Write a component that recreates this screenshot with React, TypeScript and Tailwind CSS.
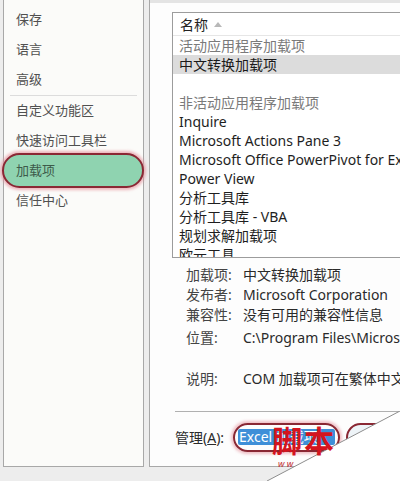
const FONT = '"Noto Sans", "Noto Sans CJK SC", sans-serif';

const NAV_TOP = ['保存', '语言', '高级'];
const NAV_BOTTOM = ['自定义功能区', '快速访问工具栏', '加载项', '信任中心'];

const ROWS: { text: string; kind: 'group' | 'item' | 'selected' | 'blank' }[] = [
  { text: '活动应用程序加载项', kind: 'group' },
  { text: '中文转换加载项', kind: 'selected' },
  { text: '', kind: 'blank' },
  { text: '非活动应用程序加载项', kind: 'group' },
  { text: 'Inquire', kind: 'item' },
  { text: 'Microsoft Actions Pane 3', kind: 'item' },
  { text: 'Microsoft Office PowerPivot for Excel 2013', kind: 'item' },
  { text: 'Power View', kind: 'item' },
  { text: '分析工具库', kind: 'item' },
  { text: '分析工具库 - VBA', kind: 'item' },
  { text: '规划求解加载项', kind: 'item' },
  { text: '欧元工具', kind: 'item' },
];

const DETAILS = [
  { label: '加载项:', value: '中文转换加载项', cls: 'mt-0' },
  { label: '发布者:', value: 'Microsoft Corporation', cls: 'mt-0' },
  { label: '兼容性:', value: '没有可用的兼容性信息', cls: 'mt-0' },
  { label: '位置:', value: 'C:\\Program Files\\Microsoft Office\\Office15', cls: 'mt-[3px]' },
  { label: '说明:', value: 'COM 加载项可在繁体中文和简体中文之间转换', cls: 'mt-[21px]' },
];

function NavItem({ label, active }: { label: string; active?: boolean }) {
  return (
    <div className="relative h-[30px] flex items-center pl-[12px] text-[13px] text-[#505050]">
      {active && (
        <div className="absolute -left-[2px] -right-[1px] -top-[3px] -bottom-[2px] rounded-full bg-[#8fd3b0] border-2 border-[#8a2834] shadow-[0_0_3px_2px_rgba(230,150,160,0.7)]" />
      )}
      <span className={active ? 'relative text-[#3d5a4a]' : 'relative'}>{label}</span>
    </div>
  );
}

export default function App() {
  return (
    <div
      className="relative w-[400px] h-[481px] overflow-hidden bg-[#ededed] flex gap-[5px] pl-[3px] pb-[14px]"
      style={{ fontFamily: FONT }}
    >
      {/* left nav */}
      <div className="w-[141px] shrink-0 bg-[#fbfbf9] border-x border-b border-[#a8a8a8] pt-[5px]">
        {NAV_TOP.map((l) => (
          <NavItem key={l} label={l} />
        ))}
        <div className="mx-[6px] h-px bg-[#dcdcdc]" />
        {NAV_BOTTOM.map((l) => (
          <NavItem key={l} label={l} active={l === '加载项'} />
        ))}
      </div>

      {/* right content */}
      <div className="flex-1 min-w-0 bg-[#fdfdfd] border-l border-b border-[#a8a8a8] overflow-hidden flex flex-col">
        <div className="h-[3px] bg-[#e4e4e4]" />
        <div className="pl-[22px] pt-[9px]">
          <div className="w-[260px] h-[246px] border-l border-y border-[#9c9c9c] bg-white overflow-hidden text-[14px] leading-[19px] whitespace-nowrap">
            <div className="h-[23px] flex items-center pl-[7px] gap-[6px] border-b border-[#e6e6e6] text-[#222]">
              <span>名称</span>
              <svg width="8" height="5" viewBox="0 0 8 5">
                <path d="M0 5 L4 0 L8 5 Z" fill="#b8b8b8" />
              </svg>
            </div>
            {ROWS.map((r, i) => (
              <div
                key={i}
                className={
                  r.kind === 'selected'
                    ? 'h-[19px] pl-[6px] bg-[#dcdcdc] text-[#1a1a1a]'
                    : r.kind === 'group'
                    ? 'h-[19px] pl-[6px] text-[#7a7a7a]'
                    : 'h-[19px] pl-[6px] text-[#1e1e1e]'
                }
              >
                {r.text}
              </div>
            ))}
          </div>
        </div>

        <div className="pl-[36px] pt-[6px] text-[14px] text-[#2a2a2a] whitespace-nowrap">
          {DETAILS.map((d) => (
            <div key={d.label} className={`flex h-[20px] items-center ${d.cls}`}>
              <span className="w-[57px] shrink-0 text-[#444]">{d.label}</span>
              <span>{d.value}</span>
            </div>
          ))}
        </div>

        <div className="ml-[25px] mt-[23px] h-px bg-[#b0b0b0]" />

        <div className="flex items-center pl-[25px] mt-[10px] h-[30px] text-[14px] text-[#2a2a2a] whitespace-nowrap">
          <span className="w-[58px] shrink-0">
            管理(<span className="underline">A</span>):
          </span>
          <div className="w-[107px] h-[29px] shrink-0 rounded-full border-2 border-[#8a2834] shadow-[0_0_3px_2px_rgba(230,150,160,0.6)] flex items-center px-[3px]">
            <span className="w-full h-[16px] leading-[16px] bg-[#3e8fd8] text-white pl-[1px] rounded-[2px]">Excel 加载项</span>
          </div>
          <div className="ml-[6px] w-[70px] h-[29px] shrink-0 rounded-full border-2 border-[#8a2834] bg-[#eef4f8]" />
        </div>
      </div>

      {/* page-curl corner with watermark */}
      <svg className="absolute right-0 bottom-0" width="133" height="70" viewBox="0 0 133 70">
        <path d="M133 0 L133 70 L0 70 Z" fill="#ffffff" />
        <path d="M133 0 L0 70" stroke="#8d8d8d" strokeWidth="1" />
      </svg>
      <div className="absolute left-[272px] top-[422px] text-[30px] leading-[34px] font-bold text-[#d4141e] tracking-[2px]" style={{ fontFamily: '"Noto Sans CJK SC", serif' }}>
        脚本
      </div>
      <div className="absolute left-[278px] top-[459px] text-[9px] leading-[10px] text-[#c0303a] italic">
        w w
      </div>
    </div>
  );
}
